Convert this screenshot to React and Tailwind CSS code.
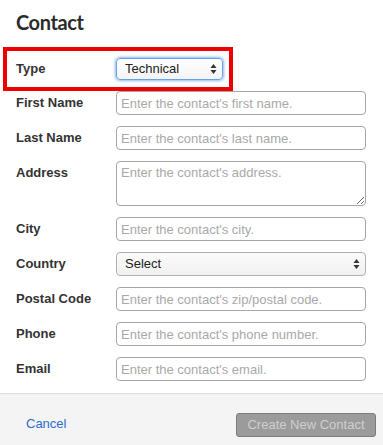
import React from "react";

const font = { fontFamily: '"Liberation Sans", Arial, Helvetica, sans-serif' };

function Arrows() {
  return (
    <svg width="7" height="11" viewBox="0 0 7 11" className="pointer-events-none absolute right-[6px] top-1/2 -translate-y-1/2">
      <path d="M3.5 0.5 L6.5 4.5 L0.5 4.5 Z" fill="#333" />
      <path d="M3.5 10.5 L6.5 6.5 L0.5 6.5 Z" fill="#333" />
    </svg>
  );
}

function Label({ children }) {
  return (
    <div className="w-[100px] shrink-0 text-[13px] font-bold leading-[24px] text-[#333]">{children}</div>
  );
}

function Field({ label, placeholder }) {
  return (
    <div className="flex items-start">
      <Label>{label}</Label>
      <input
        placeholder={placeholder}
        className="block h-[24px] w-[250px] rounded-[4px] border border-[#a6a6a6] bg-white px-[4px] text-[13px] text-[#333] outline-none placeholder:text-[#a9a9a9]"
        style={font}
      />
    </div>
  );
}

export default function App() {
  return (
    <div className="flex h-[445px] w-[383px] flex-col overflow-hidden bg-white" style={font}>
      <div className="flex-1 px-4">
        <h1
          className="pt-[10px] text-[20px] font-bold leading-[24px] tracking-[-0.4px] text-[#2b2b2b]"
          style={{ fontFamily: 'Lato, "Open Sans", sans-serif' }}
        >
          Contact
        </h1>
        <div className="ml-[-13px] mt-[13px] w-[230px] border-4 border-[#ee0000] py-[7px] pl-[9px]">
          <div className="flex h-[22px] items-center">
            <div className="w-[100px] shrink-0 text-[13px] font-bold leading-[22px] text-[#333]">Type</div>
            <div className="relative h-[22px]">
              <select
                defaultValue="Technical"
                className="block h-[22px] w-[107px] appearance-none rounded-[4px] border border-[#6aa0e6] bg-gradient-to-b from-white to-[#f4f4f4] pl-[8px] text-[13px] leading-[20px] text-[#222] shadow-[0_0_3px_1px_#8ab8f0] outline-none"
                style={font}
              >
                <option>Technical</option>
                <option>Billing</option>
              </select>
              <Arrows />
            </div>
          </div>
        </div>
        <div className="flex flex-col gap-[11px]">
          <Field label="First Name" placeholder="Enter the contact's first name." />
          <Field label="Last Name" placeholder="Enter the contact's last name." />
          <div className="flex items-start">
            <Label>Address</Label>
            <textarea
              placeholder="Enter the contact's address."
              className="block h-[45px] w-[250px] rounded-[4px] border border-[#a6a6a6] bg-white px-[4px] py-[3px] text-[13px] leading-[16px] text-[#333] outline-none placeholder:text-[#a9a9a9]"
              style={font}
            />
          </div>
          <Field label="City" placeholder="Enter the contact's city." />
          <div className="flex items-start">
            <Label>Country</Label>
            <div className="relative h-[24px]">
              <select
                defaultValue="Select"
                className="block h-[24px] w-[250px] appearance-none rounded-[4px] border border-[#b0b0b0] bg-gradient-to-b from-[#fbfbfb] to-[#f0f0f0] pl-[8px] text-[13px] text-[#222] outline-none"
                style={font}
              >
                <option>Select</option>
              </select>
              <Arrows />
            </div>
          </div>
          <Field label="Postal Code" placeholder="Enter the contact's zip/postal code." />
          <Field label="Phone" placeholder="Enter the contact's phone number." />
          <Field label="Email" placeholder="Enter the contact's email." />
        </div>
      </div>
      <div className="flex h-[52px] items-start justify-between border-t border-[#dedede] bg-[#f4f4f4] pl-[26px] pr-[7px] pt-[19px]">
        <span className="pt-[3px] text-[13px] leading-[16px] text-[#2e6bd0]">Cancel</span>
        <button
          className="h-[24px] w-[140px] rounded-[3px] border border-[#7c7c7c] bg-[#9b9b9b] text-[13px] text-[#cfcfcf]"
          style={font}
        >
          Create New Contact
        </button>
      </div>
    </div>
  );
}
